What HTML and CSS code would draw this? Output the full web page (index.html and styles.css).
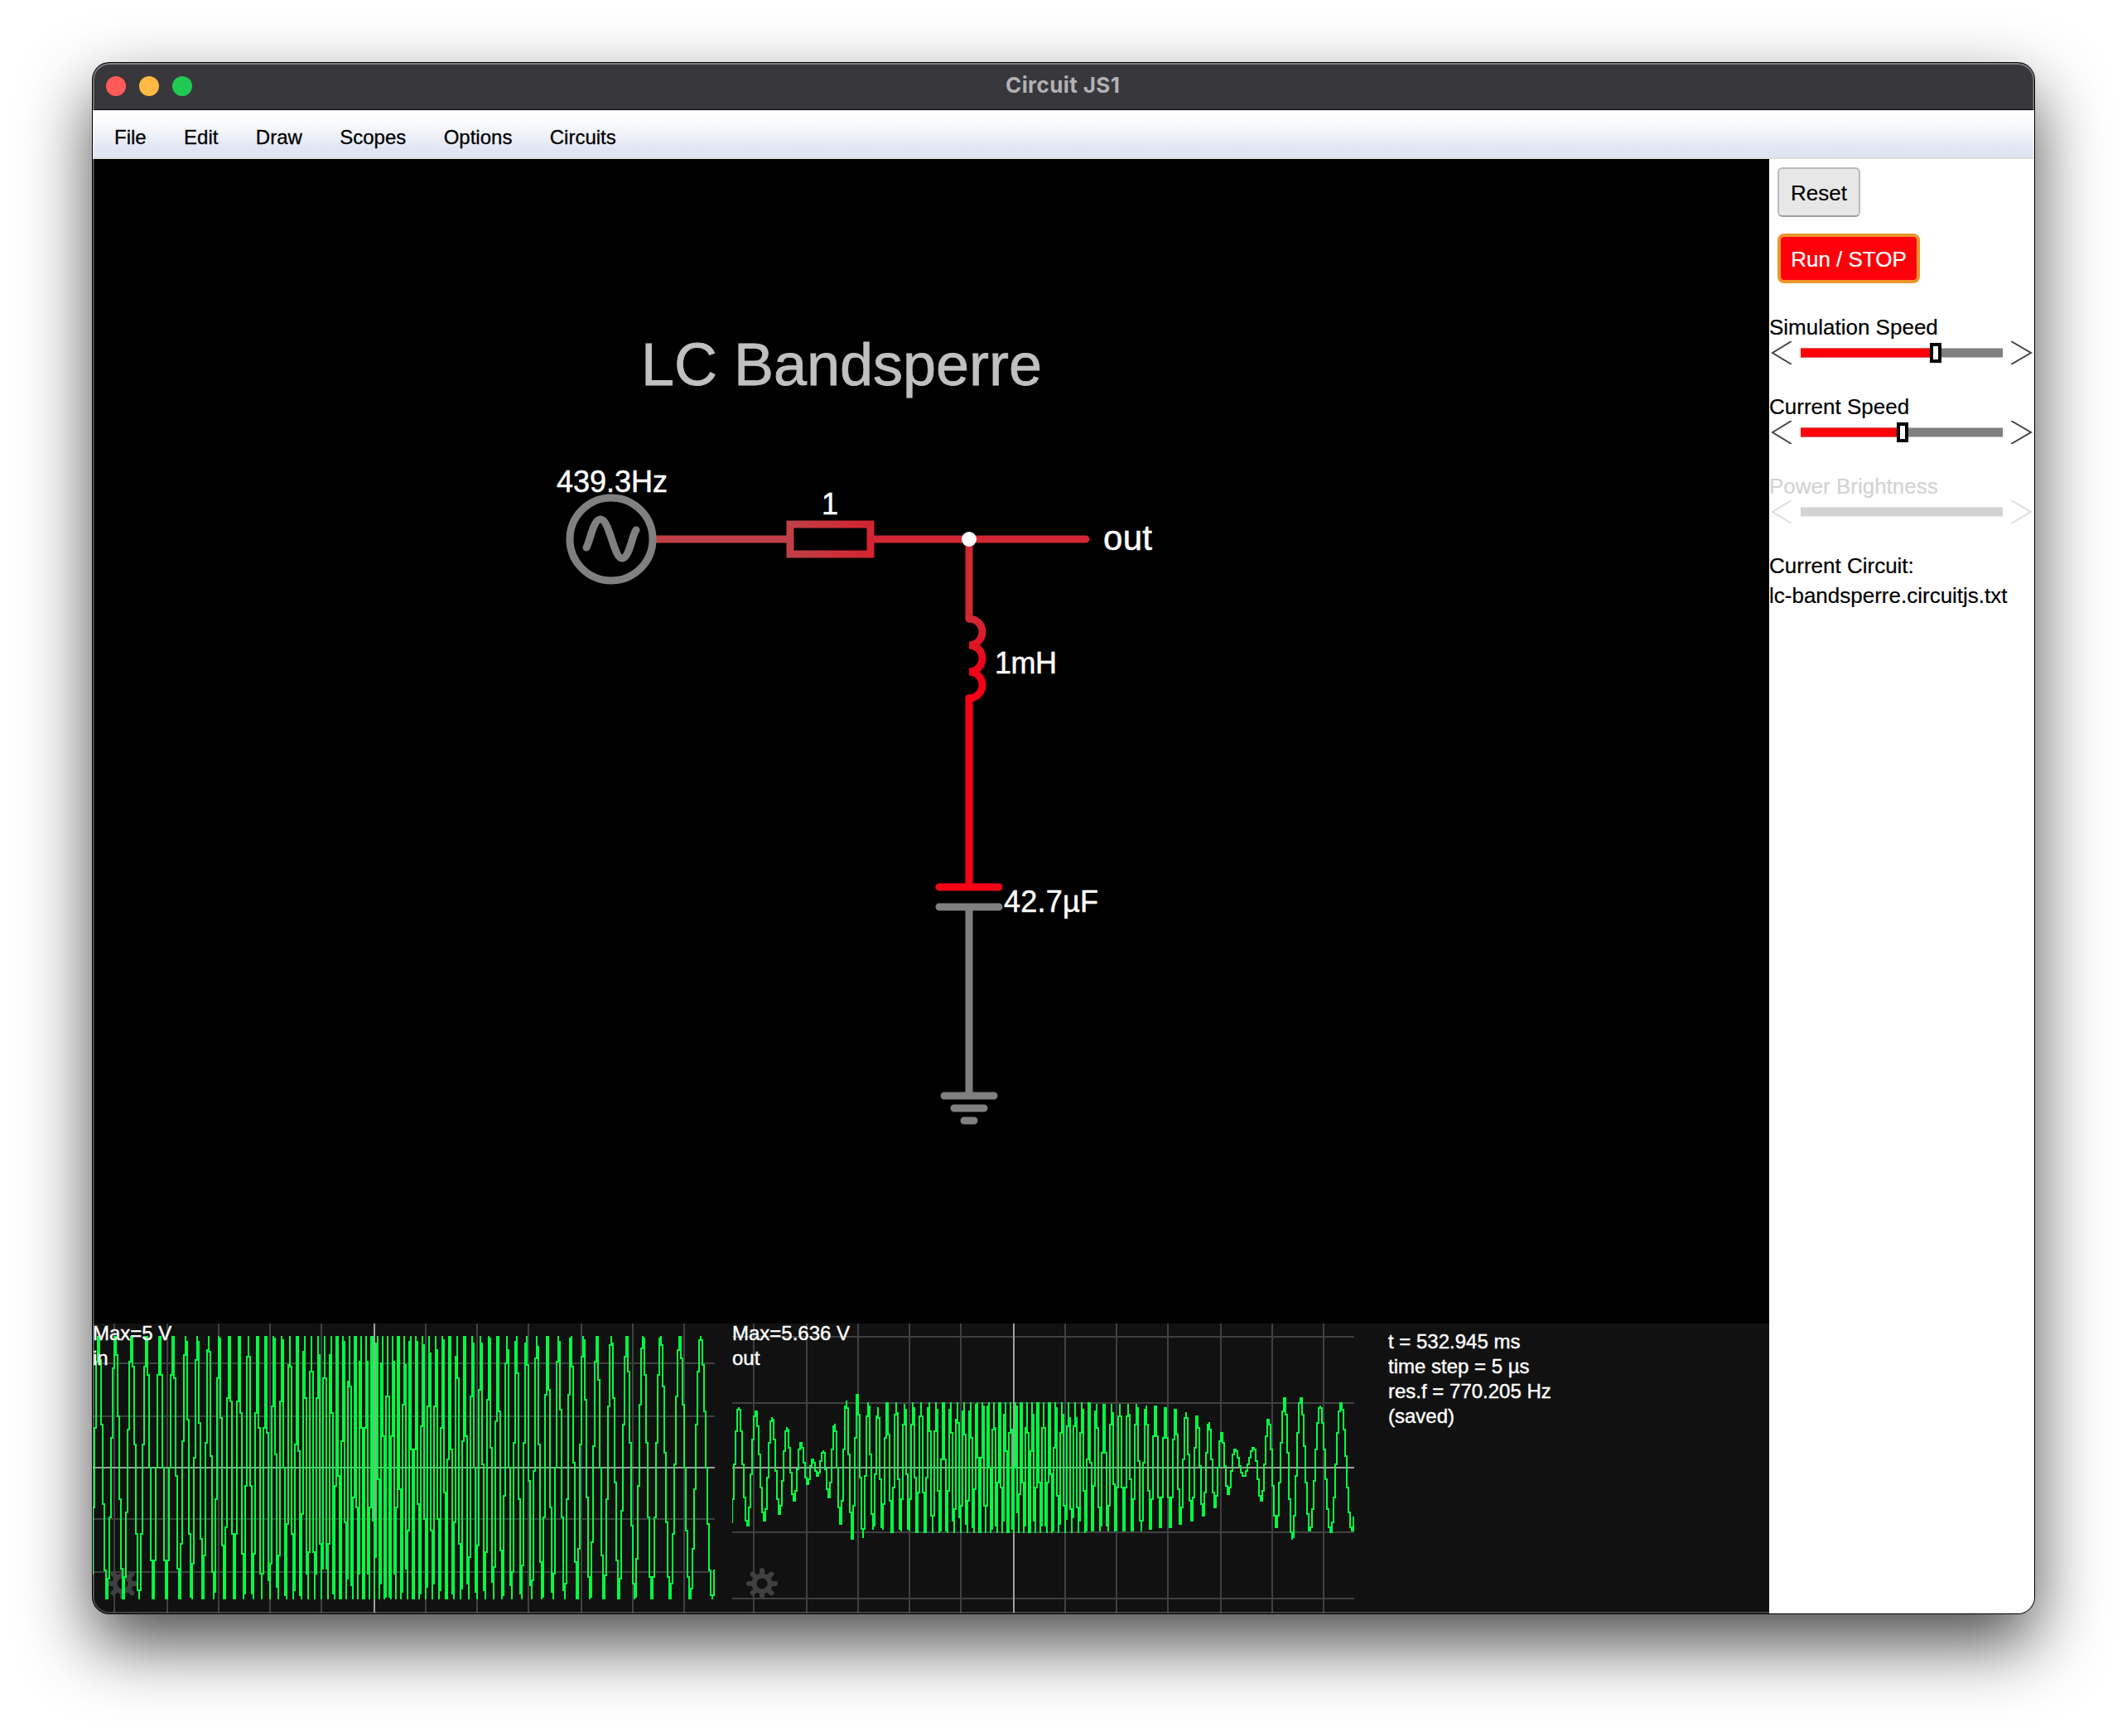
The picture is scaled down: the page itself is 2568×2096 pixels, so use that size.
FILE: index.html
```html
<!DOCTYPE html>
<html lang="en">
<head>
<meta charset="utf-8">
<title>Circuit JS1</title>
<link rel="stylesheet" href="styles.css">
</head>
<body>
<div class="window">
  <header class="titlebar">
    <div class="lights"><i class="light close"></i><i class="light minimize"></i><i class="light zoom"></i></div>
    <div class="title">Circuit JS1</div>
  </header>
  <nav class="menubar"><span>File</span><span>Edit</span><span>Draw</span><span>Scopes</span><span>Options</span><span>Circuits</span></nav>
  <div class="content">
    <main class="workspace">
      <svg class="schematic" viewBox="112 192 2024 1406" width="2024" height="1406">
        <defs>
          <linearGradient id="res" gradientUnits="userSpaceOnUse" x1="951" y1="0" x2="1053" y2="0"><stop offset="0" stop-color="#c04046"/><stop offset="1" stop-color="#d32430"/></linearGradient>
          <linearGradient id="ind" gradientUnits="userSpaceOnUse" x1="0" y1="747" x2="0" y2="843"><stop offset="0" stop-color="#d12834"/><stop offset=".65" stop-color="#ee0018"/><stop offset="1" stop-color="#fb0015"/></linearGradient>
        </defs>
        <g class="wire">
          <path class="v-in" d="M792 651H951"/>
          <path class="v-out" d="M1053 651H1311M1170 651V747"/>
          <path class="v-mid" d="M1170 843V1071M1134 1071H1206"/>
          <path stroke="url(#ind)" d="M1170 747a16 16 0 0 1 0 32a16 16 0 0 1 0 32a16 16 0 0 1 0 32"/>
          <rect stroke="url(#res)" x="954" y="633" width="97" height="36"/>
          <path class="v-zero" d="M1134 1095H1206M1170 1095V1323M1140 1323H1200M1152 1338H1188M1164 1353H1176"/>
          <circle class="v-zero" cx="738" cy="651" r="50"/>
          <path class="v-zero" d="M708 661c4-6 8-34 17-34c11 0 16 47 26 47c9 0 12-28 17-34"/>
        </g>
        <circle cx="1170" cy="651" r="9" fill="#fff"/>
        <text class="caption" x="774" y="465" textLength="484">LC Bandsperre</text>
        <text class="label" x="672" y="594" textLength="134">439.3Hz</text>
        <text class="label" x="992" y="621">1</text>
        <text class="name" x="1332" y="664" textLength="59">out</text>
        <text class="label" x="1201" y="813" textLength="75">1mH</text>
        <text class="label" x="1212" y="1101" textLength="114">42.7µF</text>
      </svg>
      <div class="scopes">
        <section class="scope">
          <svg class="plot" id="scope-in" viewBox="112 1598 751 350" width="751" height="350"></svg>
          <div class="scope-label">Max=5 V<br>in</div>
        </section>
        <section class="scope">
          <svg class="plot" id="scope-out" viewBox="884 1598 751 350" width="751" height="350"></svg>
          <div class="scope-label">Max=5.636 V<br>out</div>
        </section>
        <section class="readout">t = 532.945 ms<br>time step = 5 µs<br>res.f = 770.205 Hz<br>(saved)</section>
      </div>
    </main>
    <aside class="sidebar">
      <button class="btn reset">Reset</button>
      <button class="btn run">Run / STOP</button>
      <div class="controls">
        <div class="control"><label>Simulation Speed</label>
          <svg class="slider" viewBox="0 0 320 28" width="320" height="28"><path class="arrow" d="M27 0L4 14L27 28M292 0L316 14L292 28"/><path class="rest" d="M38 14H282"/><path class="done" d="M38 14H200"/><rect class="thumb" x="196" y="4" width="10" height="20"/></svg></div>
        <div class="control"><label>Current Speed</label>
          <svg class="slider" viewBox="0 0 320 28" width="320" height="28"><path class="arrow" d="M27 0L4 14L27 28M292 0L316 14L292 28"/><path class="rest" d="M38 14H282"/><path class="done" d="M38 14H160"/><rect class="thumb" x="156" y="4" width="10" height="20"/></svg></div>
        <div class="control disabled"><label>Power Brightness</label>
          <svg class="slider" viewBox="0 0 320 28" width="320" height="28"><path class="arrow" d="M27 0L4 14L27 28M292 0L316 14L292 28"/><path class="rest" d="M38 14H282"/></svg></div>
      </div>
      <div class="current">Current Circuit:<br>lc-bandsperre.circuitjs.txt</div>
    </aside>
  </div>
</div>
<script src="scopes.js"></script>
</body>
</html>
```
FILE: styles.css
```css
* { box-sizing: border-box; }
body { margin: 0; width: 2568px; height: 2096px; padding: 76px 112px 0; background: #fff; font-family: "Liberation Sans", Arial, sans-serif; overflow: hidden; }
.window { position: relative; width: 2344px; height: 1872px; border-radius: 20px; overflow: hidden; background: #111; display: flex; flex-direction: column; box-shadow: 0 0 0 1px #000, 0 36px 84px rgba(0,0,0,.71); }
.window::after { content: ""; position: absolute; inset: 0; border-radius: 20px; pointer-events: none; box-shadow: inset 0 0 0 2px rgba(255,255,255,.2), inset 0 1px 0 1px rgba(255,255,255,.2); }
.titlebar { flex: 0 0 57px; display: grid; grid-template-columns: 1fr auto 1fr; align-items: center; padding: 0 16px; background: #38373b; border-bottom: 1px solid #000; }
.lights { display: flex; gap: 16px; }
.light { width: 24px; height: 24px; border-radius: 50%; }
.close { background: #ff5a58; }
.minimize { background: #ffb944; }
.zoom { background: #20c954; }
.title { font: 700 26px Inter, sans-serif; letter-spacing: .4px; color: #b2b1b4; width: 140px; padding-bottom: 3px; white-space: nowrap; }
.menubar { flex: 0 0 59px; display: flex; gap: 45.4px; padding: 8px 26px 0; align-items: center; font-size: 24px; background: linear-gradient(#fff 0%, #fafbfd 25%, #dfe5f2 85%, #dfe5f2 100%); border-bottom: 2px solid #ddd; color: #000; -webkit-text-stroke: .3px; }
.content { flex: 1; display: flex; min-height: 0; }
.workspace { width: 2024px; background: #000; display: flex; flex-direction: column; }
.schematic, .plot { display: block; }
.wire { fill: none; stroke-width: 9; stroke-linecap: round; }
.v-in { stroke: #c04046; }
.v-out { stroke: #d12834; }
.v-mid { stroke: #fb0015; }
.v-zero { stroke: #808080; }
text { font-family: "Liberation Sans", Arial, sans-serif; fill: #fff; stroke: #fff; stroke-width: .5px; }
.caption { font-size: 72px; fill: #c0c0c0; stroke: #c0c0c0; stroke-width: .8px; }
.label { font-size: 36px; }
.name { font-size: 42px; }
.scopes { flex: 1; display: flex; gap: 20px; background: #111; color: #fff; font-size: 24px; line-height: 30px; -webkit-text-stroke: .4px; }
.scope { position: relative; width: 752px; }
.scope-label { position: absolute; left: 0; top: -3px; white-space: nowrap; }
.readout { padding: 7px 0 0 20px; white-space: nowrap; }
.sidebar { width: 320px; background: #fff; color: #000; display: flex; flex-direction: column; align-items: flex-start; padding-top: 10px; font-size: 26px; -webkit-text-stroke: .2px; }
.btn { display: block; height: 60px; margin: 0 0 20px 10px; padding: 2px 0 0; font: 26px "Liberation Sans", Arial, sans-serif; white-space: nowrap; }
.reset { width: 100px; background: #e7e7e7; border: 2px solid #bbb; border-bottom-color: #a0a0a0; border-radius: 6px; color: #000; }
.run { width: 172px; background: #ff000b; border: 4px solid #eb962b; border-radius: 8px; color: #fff; }
.controls { padding-top: 16px; }
.control { height: 96px; width: 320px; }
.control label { display: block; height: 34px; line-height: 34px; white-space: nowrap; }
.slider { display: block; }
.arrow { fill: none; stroke: #444; stroke-width: 2; }
.rest { stroke: #808080; stroke-width: 11; }
.done { stroke: #ff000b; stroke-width: 11; }
.thumb { fill: #fff; stroke: #000; stroke-width: 4; }
.disabled { color: #d3d3d3; }
.disabled .arrow { stroke: #ddd; }
.disabled .rest { stroke: #d3d3d3; }
.current { margin-top: -1px; line-height: 36px; white-space: nowrap; font-size: 26px; }
```
FILE: scopes.js
```js
const CENTER = 1772, TOP = 1598, BOTTOM = 1947;

// Half-cosine interpolation through the signal's turning points [x, amplitude].
function sample(points, x) {
  let i = 1;
  while (i < points.length - 1 && points[i][0] < x) i++;
  const [x0, a] = points[i - 1], [x1, b] = points[i];
  return a + (b - a) * (1 - Math.cos(Math.PI * (x - x0) / (x1 - x0))) / 2;
}

// Peaks are given; troughs fall halfway between two peaks.
function alternate(peaks, amplitude) {
  const points = [];
  peaks.forEach((x, i) => {
    points.push([x, amplitude]);
    if (i < peaks.length - 1) points.push([(x + peaks[i + 1]) / 2, -amplitude]);
  });
  return points;
}

function draw(id, left, verticals, horizontals, middle, points) {
  const right = left + 751;
  let dark = '', light = '', wave = '';
  verticals.forEach(x => dark += `M${x} ${TOP}V${BOTTOM}`);
  horizontals.forEach(y => dark += `M${left} ${y}H${right}`);
  light = `M${left} ${CENTER}H${right}M${middle} ${TOP}V${BOTTOM}`;
  for (let x = left - 1; x < right; x += 2) {
    let lo = Infinity, hi = -Infinity;
    for (let k = 0; k <= 12; k++) {
      const v = sample(points, x + k / 6);
      lo = Math.min(lo, v);
      hi = Math.max(hi, v);
    }
    const y0 = CENTER - 2 * Math.round(hi / 2) - 1;
    const y1 = CENTER - 2 * Math.round(lo / 2) + 1;
    wave += `M${x} ${y0}h2V${y1}h-2z`;
  }
  const cx = left + 36, cy = 1912;
  let gear = `<circle cx="${cx}" cy="${cy}" r="9.5" fill="none" stroke="#404040" stroke-width="6"/>`;
  for (let i = 0; i < 8; i++) {
    gear += `<path d="M${cx} ${cy - 11}V${cy - 16}" stroke="#404040" stroke-width="6" stroke-linecap="round" transform="rotate(${i * 45} ${cx} ${cy})"/>`;
  }
  document.getElementById(id).innerHTML = gear +
    `<path d="${dark}" stroke="#404040" stroke-width="2"/><path d="${light}" stroke="#a0a0a0" stroke-width="2"/>` +
    `<path d="${wave}" fill="#00ff41" shape-rendering="crispEdges"/>`;
}

const inPeaks = [-3, 57, 118, 177, 231, 279, 327, 373, 415, 456, 494, 531, 567, 600, 633, 663, 692, 722, 750, 777, 803, 828, 853, 876, 899, 921, 944, 966, 987, 1007, 1027, 1047, 1066, 1085, 1104, 1123, 1143]
  .map(p => 100 + p / 3)
  .concat([24.7, 46, 68, 91.7, 115, 139.2, 164, 189, 215.4, 243, 271.5, 301.5, 332, 363, 396.5, 430.5, 467, 504.5, 543, 583, 628, 673, 722, 774, 830, 889, 953, 1022, 1098, 1182].map(p => 480 + p / 3));
draw('scope-in', 112,
  [138, 202, 264, 326, 388, 514, 576, 638, 702, 764, 826],
  [1646, 1710, 1834, 1898], 452,
  alternate(inPeaks, 158.5));

const early = [[35, -218], [66, 218], [97, -212], [127, 206], [159, -193], [186, 182], [214, -168], [240, 145], [266, -120], [291, 92], [315, -60], [334, 31], [352, -30], [372, 62], [393, -109], [413, 158], [435, -205], [456, 242], [477, -259], [496, 266], [516, -252], [535, 236], [553, -224], [570, 218], [586, -222], [603, 236], [621, -236], [636, 236], [652, -228], [667, 230], [682, -230]]
  .map(([p, a]) => [870 + p / 3, a / 3]);
const middlePeaks = [697, 726, 755, 781, 807, 833, 858, 881, 905, 928, 950, 970, 990, 1011, 1031, 1050, 1070, 1089, 1110, 1129, 1149, 1170]
  .map(p => 870 + p / 3).concat([21, 43.5, 66.7, 90.3, 114.3, 139].map(p => 1260 + p / 3));
const late = [[152, -234], [165, 232], [177.5, -230], [191, 230], [205, -230], [219, 230], [233, -230], [246.5, 230], [261, -230], [276, 230], [291, -230], [306, 230], [322, -230], [337, 230], [354, -225], [371, 224], [387, -224], [405, 224], [423, -218], [441, 218], [459, -218], [477, 212], [496, -205], [516, 200], [537, -194], [556, 188], [578, -176], [599, 164], [621, -145], [644, 128], [669, -98], [692, 68], [725, -31], [762, 73], [789, -122], [815, 176], [843, -218], [873, 249], [901, -260], [931, 254], [965, -230], [1002, 224], [1040, -236], [1077, 236], [1117, -230], [1155, 230]]
  .map(([p, a]) => [1260 + p / 3, a / 3]);
draw('scope-out', 884,
  [910, 974, 1036, 1098, 1160, 1286, 1348, 1410, 1474, 1536, 1598],
  [1614, 1694, 1850, 1930], 1224,
  [...early, ...alternate(middlePeaks, 78.5), ...late]);
```
